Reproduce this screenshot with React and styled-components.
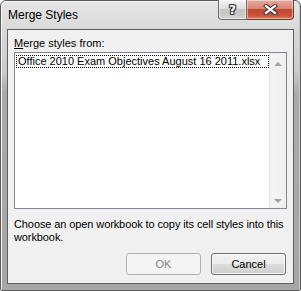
import React from "react";
import styled, { createGlobalStyle } from "styled-components";

const GlobalStyle = createGlobalStyle`
  html, body {
    margin: 0;
    padding: 0;
    background: #ffffff;
  }
  body {
    font-family: "Liberation Sans", Arial, sans-serif;
  }
`;

const Window = styled.div`
  width: 301px;
  height: 291px;
  box-sizing: border-box;
  border: 1px solid #5c5c5c;
  border-radius: 6px 6px 2px 2px;
  padding: 0 6px 6px 6px;
  display: flex;
  flex-direction: column;
  background: linear-gradient(
    to bottom,
    #e6e6e6 0px,
    #d9d9d9 28px,
    #cbcbcb 70px,
    #aaaaaa 92px,
    #a6a6a6 100%
  );
  box-shadow: inset 1px 1px 0 #f4f4f4, inset -1px 0 0 #c8c8c8;
`;

const TitleBar = styled.div`
  height: 28px;
  display: flex;
  align-items: flex-start;
  justify-content: space-between;
`;

const TitleText = styled.span`
  margin: 7px 0 0 1px;
  font-size: 12px;
  line-height: 14px;
  color: #000000;
`;

const CaptionButtons = styled.div`
  display: flex;
  margin-top: -1px;
`;

const CaptionButton = styled.div`
  height: 20px;
  box-sizing: border-box;
  display: flex;
  align-items: center;
  justify-content: center;
  border: 1px solid ${(p) => (p.$close ? "#6b3a32" : "#6c6c6c")};
  border-top: none;
  width: ${(p) => (p.$close ? "47px" : "29px")};
  border-radius: ${(p) => (p.$close ? "0 0 4px 0" : "0 0 0 4px")};
  ${(p) => (p.$close ? "border-left: none;" : "")}
  background: ${(p) =>
    p.$close
      ? "linear-gradient(to bottom, #e8a89a 0%, #d98574 45%, #c4462e 50%, #c95038 80%, #dc7a60 100%)"
      : "linear-gradient(to bottom, #f2f2f2 0%, #dedede 45%, #c4c4c4 50%, #c9c9c9 80%, #d6d6d6 100%)"};
  box-shadow: inset 0 0 0 1px rgba(255, 255, 255, 0.45);
`;

const HelpGlyph = styled.span`
  font-family: "DejaVu Sans", sans-serif;
  font-weight: bold;
  font-size: 12px;
  line-height: 12px;
  color: #ffffff;
  margin-top: 1px;
  text-shadow: 1px 0 0 #3a3a3a, -1px 0 0 #3a3a3a, 0 1px 0 #3a3a3a,
    0 -1px 0 #3a3a3a, 1px 1px 0 #3a3a3a, -1px -1px 0 #3a3a3a,
    1px -1px 0 #3a3a3a, -1px 1px 0 #3a3a3a;
`;

const Client = styled.div`
  flex: 1;
  box-sizing: border-box;
  border: 1px solid #5e5e5e;
  background: #f0f0f0;
  padding: 7px 6px 8px 6px;
  display: flex;
  flex-direction: column;
  font-size: 11px;
  line-height: 13px;
  color: #000000;
`;

const Label = styled.div`
  height: 13px;
  margin-bottom: 2px;
`;

const AccessKey = styled.span`
  text-decoration: underline;
`;

const ListBox = styled.div`
  height: 157px;
  box-sizing: border-box;
  border: 1px solid #828790;
  background: #ffffff;
  display: flex;
`;

const ListItems = styled.div`
  flex: 1;
  padding: 2px 0 0 1px;
`;

const ListItem = styled.div`
  height: 13px;
  box-sizing: border-box;
  padding-left: 1px;
  border: 1px dotted #000000;
  line-height: 11px;
  white-space: nowrap;
  overflow: hidden;
`;

const ScrollBar = styled.div`
  width: 17px;
  display: flex;
  flex-direction: column;
  justify-content: space-between;
  align-items: center;
  padding: 9px 0 5px 0;
  background: linear-gradient(
    to right,
    #e2e2e2 0px,
    #f4f4f4 2px,
    #efefef 100%
  );
`;

const Arrow = styled.div`
  width: 0;
  height: 0;
  border-left: 4px solid transparent;
  border-right: 4px solid transparent;
  ${(p) =>
    p.$down
      ? "border-top: 4px solid #a3a3a3;"
      : "border-bottom: 4px solid #a3a3a3;"}
`;

const Description = styled.div`
  margin-top: 9px;
  white-space: nowrap;
  letter-spacing: -0.1px;
`;

const ButtonRow = styled.div`
  margin-top: auto;
  display: flex;
  justify-content: flex-end;
  gap: 10px;
  padding-right: 1px;
`;

const Button = styled.button`
  width: 75px;
  height: 22px;
  box-sizing: border-box;
  font-family: "Liberation Sans", Arial, sans-serif;
  font-size: 11px;
  padding: 0;
  border-radius: 3px;
  border: 1px solid ${(p) => (p.disabled ? "#adb2b5" : "#707070")};
  color: ${(p) => (p.disabled ? "#838383" : "#000000")};
  background: ${(p) =>
    p.disabled
      ? "#f4f4f4"
      : "linear-gradient(to bottom, #f2f2f2 0%, #ebebeb 50%, #dddddd 50%, #cfcfcf 100%)"};
  box-shadow: ${(p) =>
    p.disabled ? "none" : "inset 0 0 0 1px rgba(252, 252, 252, 0.8)"};
`;

export default function App() {
  return (
    <>
      <GlobalStyle />
      <Window>
        <TitleBar>
          <TitleText>Merge Styles</TitleText>
          <CaptionButtons>
            <CaptionButton>
              <HelpGlyph>?</HelpGlyph>
            </CaptionButton>
            <CaptionButton $close>
              <svg width="15" height="11" viewBox="0 0 15 11">
                <path
                  d="M3 2 L12 9 M12 2 L3 9"
                  stroke="#3c3c3c"
                  strokeWidth="4.2"
                  strokeLinecap="square"
                />
                <path
                  d="M3 2 L12 9 M12 2 L3 9"
                  stroke="#ffffff"
                  strokeWidth="2.2"
                  strokeLinecap="square"
                />
              </svg>
            </CaptionButton>
          </CaptionButtons>
        </TitleBar>
        <Client>
          <Label>
            <AccessKey>M</AccessKey>erge styles from:
          </Label>
          <ListBox>
            <ListItems>
              <ListItem>Office 2010 Exam Objectives August 16 2011.xlsx</ListItem>
            </ListItems>
            <ScrollBar>
              <Arrow />
              <Arrow $down />
            </ScrollBar>
          </ListBox>
          <Description>
            Choose an open workbook to copy its cell styles into this
            <br />
            workbook.
          </Description>
          <ButtonRow>
            <Button disabled>OK</Button>
            <Button>Cancel</Button>
          </ButtonRow>
        </Client>
      </Window>
    </>
  );
}
